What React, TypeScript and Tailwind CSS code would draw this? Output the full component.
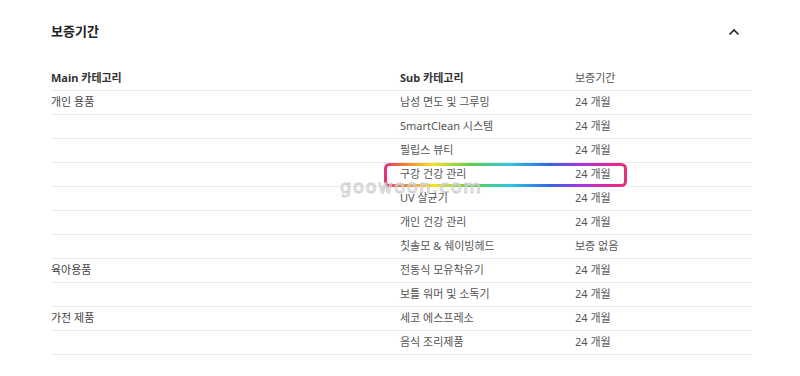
const rows: { main?: string; sub: string; period: string }[] = [
  { main: "개인 용품", sub: "남성 면도 및 그루밍", period: "24 개월" },
  { sub: "SmartClean 시스템", period: "24 개월" },
  { sub: "필립스 뷰티", period: "24 개월" },
  { sub: "구강 건강 관리", period: "24 개월" },
  { sub: "UV 살균기", period: "24 개월" },
  { sub: "개인 건강 관리", period: "24 개월" },
  { sub: "칫솔모 & 쉐이빙헤드", period: "보증 없음" },
  { main: "육아용품", sub: "전동식 모유착유기", period: "24 개월" },
  { sub: "보틀 워머 및 소독기", period: "24 개월" },
  { main: "가전 제품", sub: "세코 에스프레소", period: "24 개월" },
  { sub: "음식 조리제품", period: "24 개월" },
];

const HighlightBox = () => (
  <svg
    className="absolute left-[333px] top-[0px] pointer-events-none"
    width="243"
    height="24"
    viewBox="0 0 243 24"
  >
    <defs>
      <linearGradient id="rainbow" x1="0" y1="0" x2="1" y2="0">
        <stop offset="0" stopColor="#e8307c" />
        <stop offset="0.07" stopColor="#f27a34" />
        <stop offset="0.2" stopColor="#f4e324" />
        <stop offset="0.36" stopColor="#5ccf48" />
        <stop offset="0.52" stopColor="#2ec6e4" />
        <stop offset="0.68" stopColor="#3466e2" />
        <stop offset="0.82" stopColor="#a636e2" />
        <stop offset="0.93" stopColor="#e0269a" />
        <stop offset="1" stopColor="#e8307c" />
      </linearGradient>
    </defs>
    <rect x="1.5" y="1.5" width="240" height="21" rx="4" fill="none" stroke="url(#rainbow)" strokeWidth="3" />
  </svg>
);

export default function App() {
  return (
    <div className="w-[800px] h-[376px] bg-white font-['Noto_Sans','Noto_Sans_CJK_KR',sans-serif] text-[11px] text-[#555]">
      <div className="pl-[51px] pr-[48px]">
        <div className="flex items-start justify-between h-[67px] pt-[21px]">
          <h2 className="text-[13px] font-bold text-[#222] leading-[20px]">보증기간</h2>
          <svg className="mr-[12px] mt-[7px]" width="12" height="8" viewBox="0 0 12 8" fill="none">
            <path d="M1.5 6.5 L6 2 L10.5 6.5" stroke="#222" strokeWidth="1.6" />
          </svg>
        </div>
        <div className="relative">
          <div className="flex h-[24px] items-center border-b border-[#ebebeb] font-bold text-[#333]">
            <div className="w-[349px]">Main 카테고리</div>
            <div className="w-[175px]">Sub 카테고리</div>
            <div className="flex-1 font-normal text-[#555]">보증기간</div>
          </div>
          {rows.map((r, i) => (
            <div key={i} className="relative flex h-[24px] items-center border-b border-[#ebebeb]">
              <div className="w-[349px] text-[#444]">{r.main ?? ""}</div>
              <div className="w-[175px]">{r.sub}</div>
              <div className="flex-1">{r.period}</div>
              {i === 3 && (
                <>
                  <HighlightBox />
                  <span className="absolute left-[289px] top-[15px] font-['DejaVu_Sans',sans-serif] text-[18px] leading-none tracking-[1.5px] text-transparent [-webkit-text-stroke:1px_#cfcfcf] pointer-events-none">
                    goowoon.com
                  </span>
                </>
              )}
            </div>
          ))}
        </div>
      </div>
    </div>
  );
}
